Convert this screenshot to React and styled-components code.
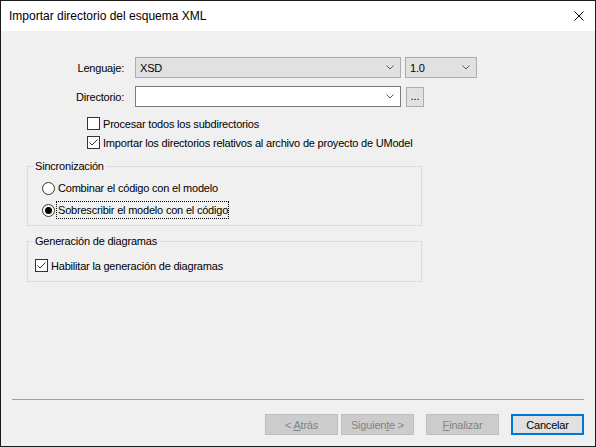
import React from "react";
import styled, { createGlobalStyle } from "styled-components";

const Global = createGlobalStyle`
  html, body { margin: 0; padding: 0; background: #f0f0f0; }
  body { font-family: "Liberation Sans", Arial, sans-serif; }
  * { box-sizing: border-box; }
`;

const Window = styled.div`
  width: 596px;
  height: 447px;
  border: 1px solid #1b1b1b;
  display: flex;
  flex-direction: column;
  background: #f0f0f0;
  color: #000;
  font-family: "Liberation Sans", Arial, sans-serif;
  font-size: 11px;
  letter-spacing: -0.2px;
`;

const TitleBar = styled.div`
  height: 30px;
  background: #fff;
  display: flex;
  align-items: center;
  justify-content: space-between;
  padding: 0 10px 0 8px;
  flex-shrink: 0;
`;

const Title = styled.span`
  font-size: 12px;
  letter-spacing: 0;
  color: #000;
`;

const Close = styled.button`
  width: 12px;
  height: 12px;
  padding: 0;
  border: none;
  background: transparent;
  display: flex;
  align-items: center;
  justify-content: center;
`;

const Body = styled.div`
  flex: 1;
  display: flex;
  flex-direction: column;
`;

const Form = styled.div`
  display: flex;
  flex-direction: column;
  padding-top: 26px;
`;

const FieldRow = styled.div`
  display: flex;
  align-items: center;
  height: 21px;
  margin-top: ${(p) => p.$mt || 0}px;
`;

const Label = styled.label`
  width: 123px;
  margin-right: 11px;
  text-align: right;
`;

const Combo = styled.div`
  width: ${(p) => p.$w}px;
  height: 21px;
  display: flex;
  align-items: center;
  justify-content: space-between;
  padding: 0 6px 0 4px;
  border: 1px solid ${(p) => (p.$editable ? "#7a7a7a" : "#adadad")};
  background: ${(p) => (p.$editable ? "#fff" : "#e1e1e1")};
  margin-left: ${(p) => p.$ml || 0}px;
`;

const Chevron = () => (
  <svg width="8" height="5" viewBox="0 0 8 5">
    <path d="M0.5 0.5 L4 4 L7.5 0.5" fill="none" stroke="#5c5c5c" strokeWidth="1" />
  </svg>
);

const Browse = styled.button`
  width: 18px;
  height: 20px;
  margin-left: 5px;
  padding: 0 0 4px 0;
  border: 1px solid #adadad;
  background: #e1e1e1;
  font-family: inherit;
  font-size: 11px;
  color: #000;
  display: flex;
  align-items: flex-end;
  justify-content: center;
  line-height: 1;
`;

const CheckRow = styled.div`
  display: flex;
  align-items: center;
  height: 13px;
  margin-top: ${(p) => p.$mt || 0}px;
  padding-left: ${(p) => p.$pl || 0}px;
  gap: 3px;
`;

const Box = styled.span`
  width: 13px;
  height: 13px;
  border: 1px solid #333;
  background: #fff;
  display: inline-flex;
  align-items: center;
  justify-content: center;
  flex-shrink: 0;
`;

const Check = ({ checked }) => (
  <Box>
    {checked && (
      <svg width="11" height="11" viewBox="0 0 11 11">
        <path d="M1.5 5.5 L4 8 L9.5 2.5" fill="none" stroke="#333" strokeWidth="1" />
      </svg>
    )}
  </Box>
);

const Group = styled.fieldset`
  margin: ${(p) => p.$mt}px 0 0 26px;
  width: 395px;
  border: 1px solid #dcdcdc;
  padding: 0 0 ${(p) => p.$pb}px 0;
  min-width: 0;
`;

const Legend = styled.legend`
  margin-left: 5px;
  padding: 0 2px;
  line-height: 14px;
  font-size: 11px;
`;

const GroupContent = styled.div`
  display: flex;
  flex-direction: column;
  padding-left: ${(p) => p.$pl}px;
`;

const RadioRow = styled.div`
  display: flex;
  align-items: center;
  height: 18px;
  margin-top: ${(p) => p.$mt}px;
  gap: 2px;
`;

const RadioCircle = styled.span`
  width: 13px;
  height: 13px;
  border-radius: 50%;
  border: 1px solid #333;
  background: #fff;
  display: inline-flex;
  align-items: center;
  justify-content: center;
  flex-shrink: 0;
  &::after {
    content: "";
    width: 7px;
    height: 7px;
    border-radius: 50%;
    background: ${(p) => (p.$on ? "#000" : "transparent")};
  }
`;

const RadioText = styled.span`
  padding: 1px 0 1px 1px;
  outline: ${(p) => (p.$focus ? "1px dotted #000" : "none")};
  line-height: 14px;
`;

const Footer = styled.div`
  margin-top: auto;
  display: flex;
  flex-direction: column;
  padding: 0 11px 11px 11px;
`;

const Separator = styled.div`
  height: 1px;
  background: #a0a0a0;
  margin-bottom: 14px;
`;

const Buttons = styled.div`
  display: flex;
  justify-content: flex-end;
`;

const Btn = styled.button`
  width: 73px;
  height: 21px;
  margin-left: ${(p) => p.$ml || 0}px;
  padding: 0;
  font-family: inherit;
  font-size: 11px;
  letter-spacing: -0.2px;
  border: ${(p) => (p.$default ? "2px solid #0078d7" : "1px solid #bfbfbf")};
  background: ${(p) => (p.$disabled ? "#cccccc" : "#e1e1e1")};
  color: ${(p) => (p.$disabled ? "#838383" : "#000")};
`;

const Key = styled.span`
  text-decoration: underline;
`;

export default function App() {
  return (
    <>
      <Global />
      <Window>
        <TitleBar>
          <Title>Importar directorio del esquema XML</Title>
          <Close aria-label="Cerrar">
            <svg width="10" height="10" viewBox="0 0 10 10">
              <path d="M0.5 0.5 L9.5 9.5 M9.5 0.5 L0.5 9.5" stroke="#000" strokeWidth="1" fill="none" />
            </svg>
          </Close>
        </TitleBar>
        <Body>
          <Form>
            <FieldRow>
              <Label>Lenguaje:</Label>
              <Combo $w={266}>
                <span>XSD</span>
                <Chevron />
              </Combo>
              <Combo $w={72} $ml={4}>
                <span>1.0</span>
                <Chevron />
              </Combo>
            </FieldRow>
            <FieldRow $mt={8}>
              <Label>Directorio:</Label>
              <Combo $w={266} $editable>
                <span />
                <Chevron />
              </Combo>
              <Browse>...</Browse>
            </FieldRow>
            <CheckRow $mt={10} $pl={86}>
              <Check />
              <span>Procesar todos los subdirectorios</span>
            </CheckRow>
            <CheckRow $mt={6} $pl={86}>
              <Check checked />
              <span>Importar los directorios relativos al archivo de proyecto de UModel</span>
            </CheckRow>
            <Group $mt={10} $pb={6}>
              <Legend>Sincronización</Legend>
              <GroupContent $pl={14}>
                <RadioRow $mt={6}>
                  <RadioCircle />
                  <RadioText>Combinar el código con el modelo</RadioText>
                </RadioRow>
                <RadioRow $mt={4}>
                  <RadioCircle $on />
                  <RadioText $focus>Sobrescribir el modelo con el código</RadioText>
                </RadioRow>
              </GroupContent>
            </Group>
            <Group $mt={8} $pb={9}>
              <Legend>Generación de diagramas</Legend>
              <GroupContent $pl={7}>
                <CheckRow $mt={11}>
                  <Check checked />
                  <span>Habilitar la generación de diagramas</span>
                </CheckRow>
              </GroupContent>
            </Group>
          </Form>
          <Footer>
            <Separator />
            <Buttons>
              <Btn $disabled>
                &lt; <Key>A</Key>trás
              </Btn>
              <Btn $disabled $ml={3}>
                Siguien<Key>t</Key>e &gt;
              </Btn>
              <Btn $disabled $ml={12}>
                <Key>F</Key>inalizar
              </Btn>
              <Btn $default $ml={12}>
                Cancelar
              </Btn>
            </Buttons>
          </Footer>
        </Body>
      </Window>
    </>
  );
}
